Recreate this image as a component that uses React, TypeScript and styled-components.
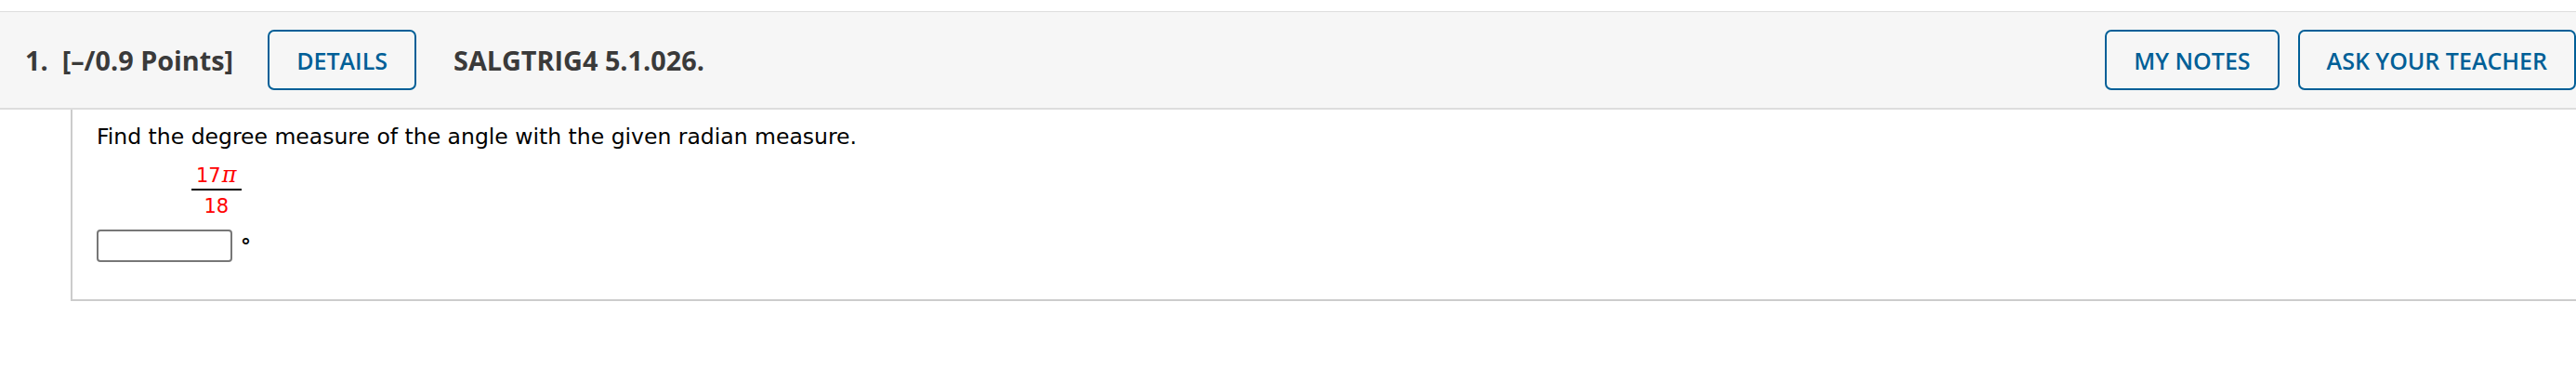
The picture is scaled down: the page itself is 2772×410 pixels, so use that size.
import React from "react";
import styled, { createGlobalStyle } from "styled-components";

const GlobalStyle = createGlobalStyle`
  html, body {
    margin: 0;
    padding: 0;
    background: #ffffff;
  }
  body {
    font-family: "Open Sans", "Liberation Sans", sans-serif;
  }
`;

const Page = styled.div`
  padding-top: 12px;
  width: 2772px;
  overflow: hidden;
`;

const QuestionHeader = styled.div`
  display: flex;
  align-items: center;
  box-sizing: border-box;
  height: 106px;
  padding-left: 27px;
  background: #f6f6f6;
  border-top: 1px solid #dddddd;
  border-bottom: 2px solid #dddddd;
  font-family: "Open Sans", "Liberation Sans", sans-serif;
  color: #3a3a3a;
`;

const HeaderText = styled.span<{ $after?: number; $before?: number }>`
  font-size: 28.8px;
  font-weight: 700;
  white-space: nowrap;
  margin-left: ${(p) => p.$before ?? 0}px;
  margin-right: ${(p) => p.$after ?? 0}px;
`;

const Spacer = styled.div`
  flex: 1;
`;

const HeaderButton = styled.button<{ $gap?: number }>`
  box-sizing: border-box;
  height: 65px;
  padding: 0 29px;
  margin-left: ${(p) => p.$gap ?? 0}px;
  background: transparent;
  border: 2px solid #005f97;
  border-radius: 7px;
  color: #005f97;
  font-family: "Open Sans", "Liberation Sans", sans-serif;
  font-size: 25px;
  font-weight: 600;
  white-space: nowrap;
  cursor: pointer;
  flex-shrink: 0;
`;

const QuestionBody = styled.div`
  margin-left: 76px;
  box-sizing: border-box;
  height: 206px;
  padding: 16px 0 0 26px;
  border-left: 2px solid #cccccc;
  border-bottom: 2px solid #cccccc;
  font-family: "DejaVu Sans", Verdana, sans-serif;
  color: #000000;
`;

const Prompt = styled.p`
  margin: 0;
  font-size: 23.5px;
  line-height: 27px;
`;

const Fraction = styled.div`
  display: inline-flex;
  flex-direction: column;
  align-items: center;
  margin: 15px 0 0 102px;
  color: #ff0000;
  font-family: "DejaVu Sans", Verdana, sans-serif;
  font-size: 21px;
  line-height: 24px;
`;

const Numerator = styled.span`
  padding: 0 5px 2px;
  border-bottom: 2px solid #000000;
  white-space: nowrap;
`;

const Pi = styled.i`
  font-family: "DejaVu Serif", "Liberation Serif", serif;
  font-size: 24px;
  margin-left: 1px;
`;

const Denominator = styled.span`
  padding-top: 5px;
`;

const AnswerRow = styled.div`
  display: flex;
  align-items: center;
  margin-top: 13px;
`;

const AnswerInput = styled.input`
  box-sizing: border-box;
  width: 146px;
  height: 35px;
  border: 2px solid #777777;
  border-radius: 4px;
  background: #ffffff;
  padding: 0 6px;
`;

const Unit = styled.span`
  margin-left: 9px;
  font-family: "DejaVu Sans", Verdana, sans-serif;
  font-weight: 700;
  font-size: 22px;
  line-height: 22px;
`;

export default function App() {
  return (
    <>
      <GlobalStyle />
      <Page>
        <QuestionHeader>
          <HeaderText $after={15}>1.</HeaderText>
          <HeaderText $after={37}>[–/0.9 Points]</HeaderText>
          <HeaderButton>DETAILS</HeaderButton>
          <HeaderText $before={40}>SALGTRIG4 5.1.026.</HeaderText>
          <Spacer />
          <HeaderButton>MY NOTES</HeaderButton>
          <HeaderButton $gap={20}>ASK YOUR TEACHER</HeaderButton>
        </QuestionHeader>
        <QuestionBody>
          <Prompt>Find the degree measure of the angle with the given radian measure.</Prompt>
          <Fraction>
            <Numerator>
              17<Pi>π</Pi>
            </Numerator>
            <Denominator>18</Denominator>
          </Fraction>
          <AnswerRow>
            <AnswerInput type="text" aria-label="answer" />
            <Unit>°</Unit>
          </AnswerRow>
        </QuestionBody>
      </Page>
    </>
  );
}
